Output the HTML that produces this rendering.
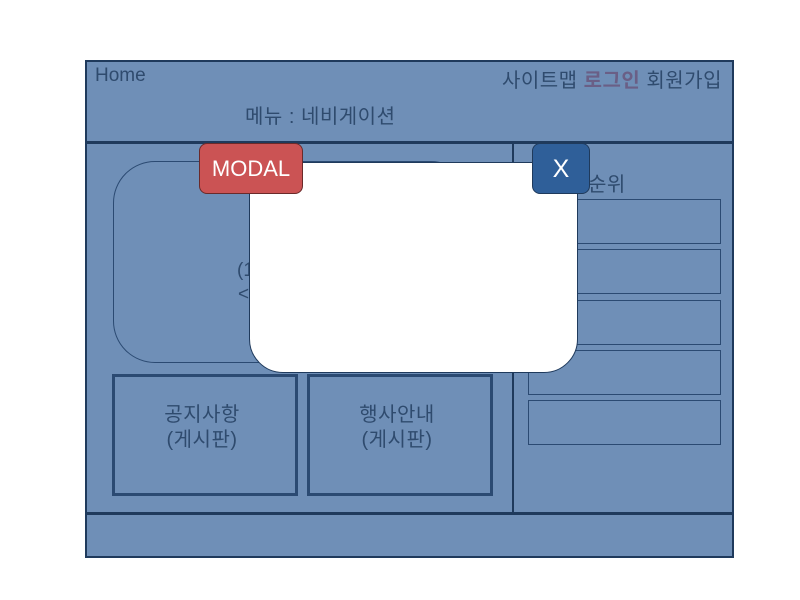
<!DOCTYPE html>
<html><head><meta charset="utf-8"><style>
body{margin:0;width:800px;height:600px;background:#fff;position:relative;overflow:hidden;font-family:"Liberation Sans","Noto Sans CJK KR",sans-serif;color:#2a4466}
div{position:absolute;box-sizing:border-box}
.b{border:1.5px solid #2b4a72}
.t{font-size:19px;color:#2f4b6e;white-space:nowrap}
.k{font-size:20px;letter-spacing:0.5px}
</style></head><body>
<div style="left:85px;top:60px;width:649px;height:498px;background:#6f8fb7;border:2.5px solid #1f3a5c"></div>
<div style="left:85px;top:141px;width:649px;height:2.5px;background:#1f3a5c"></div>
<div style="left:85px;top:512px;width:649px;height:2.5px;background:#1f3a5c"></div>
<div style="left:512px;top:142px;width:2px;height:371px;background:#1f3a5c"></div>
<div class="t" style="left:95px;top:65px">Home</div>
<div class="t k" style="right:78px;top:64px">사이트맵 <b style="color:#6a5f86">로그인</b> 회원가입</div>
<div class="t k" style="left:245px;top:100px">메뉴 : 네비게이션</div>
<div class="b" style="left:113px;top:161px;width:360px;height:202px;border-radius:42px"></div>
<div class="t" style="left:237px;top:260px">(1</div>
<div class="t" style="left:238px;top:284px">&lt;</div>
<div style="left:112px;top:374px;width:186px;height:122px;border:3px solid #2b4a72"></div>
<div style="left:307px;top:374px;width:186px;height:122px;border:3px solid #2b4a72"></div>
<div class="t k" style="left:109px;top:403px;width:186px;text-align:center;line-height:25px">공지사항<br>(게시판)</div>
<div class="t k" style="left:304px;top:403px;width:186px;text-align:center;line-height:25px">행사안내<br>(게시판)</div>
<div class="t k" style="left:588px;top:168px">순위</div>
<div class="b" style="left:528px;top:199px;width:193px;height:45px"></div>
<div class="b" style="left:528px;top:249px;width:193px;height:45px"></div>
<div class="b" style="left:528px;top:300px;width:193px;height:45px"></div>
<div class="b" style="left:528px;top:350px;width:193px;height:45px"></div>
<div class="b" style="left:528px;top:400px;width:193px;height:45px"></div>
<div style="left:249px;top:162px;width:329px;height:211px;background:#fff;border:1.5px solid #1f3a5c;border-radius:6px 6px 34px 34px"></div>
<div style="left:199px;top:143px;width:104px;height:51px;background:#cb5354;border:1.5px solid #6a2a2a;border-radius:8px;color:#fff;font-size:22px;text-align:center;line-height:50px">MODAL</div>
<div style="left:532px;top:143px;width:58px;height:51px;background:#2f5f99;border:1.5px solid #1f3a5c;border-radius:8px;color:#fff;font-size:25px;text-align:center;line-height:50px">X</div>
</body></html>
